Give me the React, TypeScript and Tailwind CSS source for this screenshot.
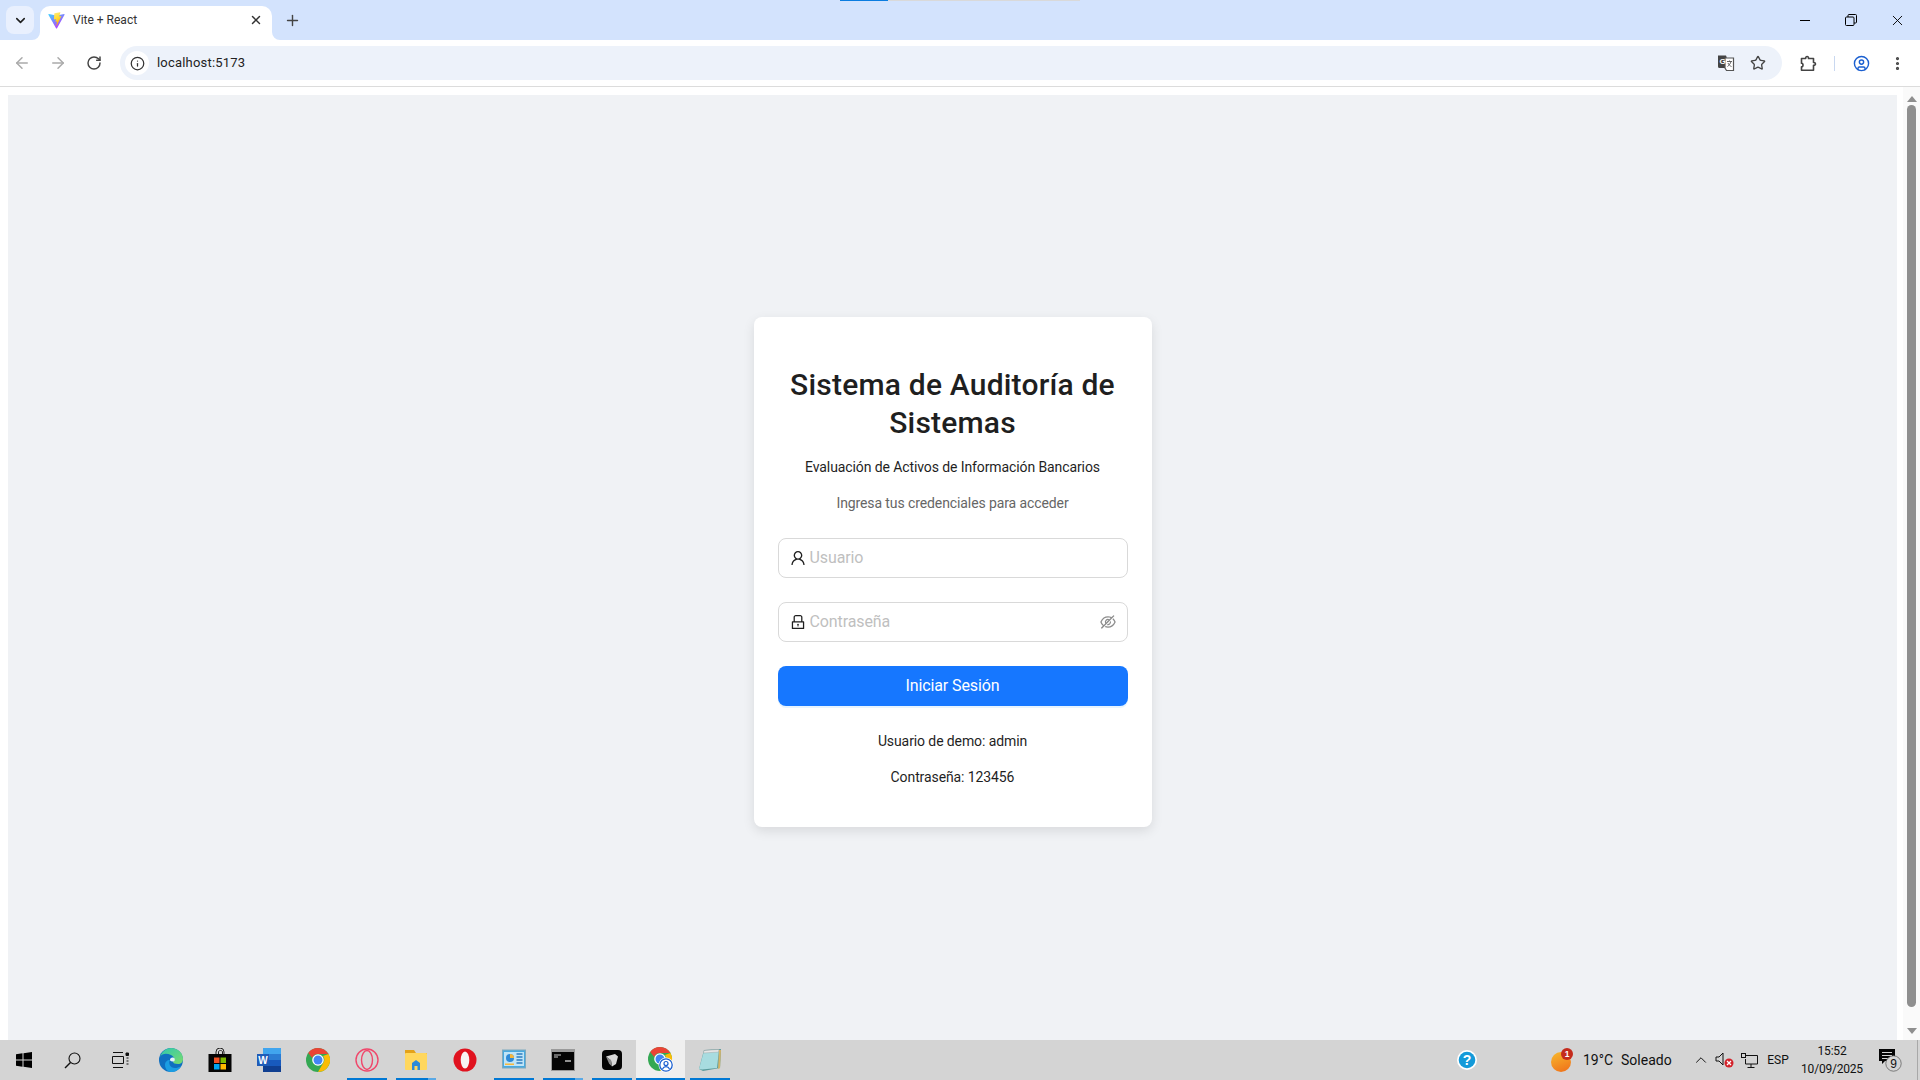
import React from 'react';
import { ArrowLeft, ArrowRight, ChevronDown, ChevronUp, CircleUser, EllipsisVertical, Info, Plus, RotateCw, Star, X } from 'lucide-react';
import { AiOutlineEyeInvisible, AiOutlineLock, AiOutlineUser } from 'react-icons/ai';

const ViteLogo = () => (
  <svg width="17" height="17" viewBox="0 0 410 404">
    <defs>
      <linearGradient id="viteA" x1="0" y1="0" x2="0.7" y2="1">
        <stop offset="0" stopColor="#41d1ff" />
        <stop offset="1" stopColor="#bd34fe" />
      </linearGradient>
      <linearGradient id="viteB" x1="0" y1="0" x2="0.3" y2="1">
        <stop offset="0" stopColor="#ffea83" />
        <stop offset="0.5" stopColor="#ffdd35" />
        <stop offset="1" stopColor="#ffa800" />
      </linearGradient>
    </defs>
    <path d="M399 63 215 392c-4 7-14 7-18 0L10 63c-4-7 2-16 10-15l184 33h4l181-33c8-1 14 8 10 15z" fill="url(#viteA)" />
    <path d="M292 1 156 28c-2 0-4 2-4 4l-8 141c0 3 3 6 6 5l38-9c4-1 7 2 6 6l-11 55c-1 4 3 7 6 6l24-7c4-1 7 2 6 6l-18 88c-1 5 6 8 9 3l2-3 111-221c2-4-1-8-5-7l-39 8c-4 1-7-3-6-6l25-88c1-4-3-8-6-7z" fill="url(#viteB)" />
  </svg>
);

const TranslateIcon = () => (
  <svg width="18" height="18" viewBox="0 0 18 18">
    <path d="M1 1.500h8l.6 1.500v11H2.500A1.500 1.500 0 0 1 1 12.500z" fill="#444" />
    <path d="M8 4h8.500v12.500H9.500L8 14z" fill="#fff" stroke="#555" strokeWidth="1.200" />
    <text x="2.600" y="10" fontSize="8" fontWeight="700" fill="#fff" fontFamily="Liberation Sans, sans-serif">G</text>
    <path d="M10 7.500h5M12.500 6.500v1M14 7.500c-.5 2-2 4-3.500 5M11 9c.6 1.500 2 3 3.500 3.500" fill="none" stroke="#555" strokeWidth="0.900" />
  </svg>
);

const PuzzleIcon = () => (
  <svg width="17" height="17" viewBox="0 0 17 17" fill="none" stroke="#444" strokeWidth="1.600" strokeLinejoin="round">
    <path d="M1.500 3.500h4.200c-.4-2.600 3.200-2.600 2.800 0h5v4c2.600-.4 2.600 3.200 0 2.800v5H1.500v-3.400c2 .4 2-4 0-3.600z" />
  </svg>
);

const RestoreIcon = () => (
  <svg width="12" height="12" viewBox="0 0 12 12" fill="none" stroke="#000" strokeWidth="1">
    <rect x="0.500" y="3" width="8.500" height="8.500" rx="1" />
    <path d="M3 3V1.500a1 1 0 0 1 1-1h6.500a1 1 0 0 1 1 1V8a1 1 0 0 1-1 1H9" />
  </svg>
);

const WindowsIcon = () => (
  <svg width="16" height="16" viewBox="0 0 16 16" fill="#000">
    <path d="M0 2.300 6.500 1.300v6.200H0zM7.500 1.200 16 0v7.500H7.500zM0 8.500h6.500v6.200L0 13.700zM7.500 8.500H16V16l-8.500-1.200z" />
  </svg>
);

const SearchIcon = () => (
  <svg width="17" height="17" viewBox="0 0 17 17" fill="none" stroke="#111" strokeWidth="1.100">
    <circle cx="10.500" cy="6.500" r="5.500" />
    <path d="M6.500 10.500 1 16" strokeWidth="1.500" />
  </svg>
);

const TaskViewIcon = () => (
  <svg width="17" height="16" viewBox="0 0 17 16" fill="none" stroke="#111" strokeWidth="1">
    <path d="M1 .5h10M1 15.500h10M.5 4.500h11v7H.5z" />
    <path d="M14 1h2.500v2.500H14z" fill="#111" />
    <path d="M14.500 6h2M14.500 9h2M14.500 12h2" />
  </svg>
);

const EdgeIcon = () => (
  <svg width="24" height="24" viewBox="0 0 24 24">
    <defs>
      <linearGradient id="edgeA" x1="0" y1="0" x2="1" y2="1">
        <stop offset="0" stopColor="#2fc7b0" />
        <stop offset="1" stopColor="#7bdc6c" />
      </linearGradient>
    </defs>
    <circle cx="12" cy="12" r="12" fill="#0f6fc0" />
    <path d="M1 9C3 3 8 0 12 0c7 0 12 5 12 11 0 3-2 5-5 5-3 0-5-1-5-2 2-1 2-5-2-7C8 5 3 5 1 9z" fill="url(#edgeA)" />
    <path d="M11 12c-2 3 0 8 5 8 2 0 4-.5 6-2-2 4-6 6-10 6-4 0-6-4-6-7 0-3 2-5 5-5z" fill="#1b9de2" />
    <path d="M11 12c0-2 2-3 4-2 1 .5 1 2.500 0 3.500-2 0-4-.5-4-1.500z" fill="#fff" opacity="0.9" />
  </svg>
);

const StoreIcon = () => (
  <svg width="24" height="24" viewBox="0 0 24 24">
    <path d="M8 7V4a4 4 0 0 1 8 0v3M10.500 7V3.500a2.500 2.500 0 0 1 4 0V7" fill="none" stroke="#222" strokeWidth="1" />
    <rect x="0.500" y="6" width="23" height="18" fill="#050505" />
    <rect x="6" y="9.500" width="5.500" height="5.500" fill="#f25022" />
    <rect x="12.500" y="9.500" width="5.500" height="5.500" fill="#7fba00" />
    <rect x="6" y="16" width="5.500" height="5.500" fill="#00a4ef" />
    <rect x="12.500" y="16" width="5.500" height="5.500" fill="#ffb900" />
  </svg>
);

const WordIcon = () => (
  <svg width="24" height="24" viewBox="0 0 24 24">
    <rect x="6" y="0" width="18" height="6" fill="#41a5ee" />
    <rect x="6" y="6" width="18" height="6" fill="#2b7cd3" />
    <rect x="6" y="12" width="18" height="6" fill="#185abd" />
    <rect x="6" y="18" width="18" height="6" fill="#103f91" />
    <rect x="0" y="6" width="12" height="12" fill="#1f5cb8" />
    <text x="6" y="16" textAnchor="middle" fontSize="10" fontWeight="700" fill="#fff" fontFamily="Liberation Sans, sans-serif">W</text>
  </svg>
);

const ChromeIcon = () => (
  <svg width="24" height="24" viewBox="0 0 24 24">
    <circle cx="12" cy="12" r="12" fill="#34a853" />
    <path d="M12 0a12 12 0 0 1 10.400 6H12a6 6 0 0 0-5.700 4L2.200 5A12 12 0 0 1 12 0z" fill="#ea4335" />
    <path d="M22.400 6A12 12 0 0 1 12 24l5.200-9A6 6 0 0 0 17 8z" fill="#fbbc04" />
    <circle cx="12" cy="12" r="5.800" fill="#fff" />
    <circle cx="12" cy="12" r="4.500" fill="#4285f4" />
  </svg>
);

const OperaGxIcon = () => (
  <svg width="24" height="24" viewBox="0 0 24 24" fill="none" stroke="#f0476b" strokeWidth="1.400">
    <circle cx="12" cy="12" r="11" />
    <ellipse cx="12" cy="12" rx="5.500" ry="9.500" />
  </svg>
);

const FolderIcon = () => (
  <svg width="24" height="24" viewBox="0 0 24 24">
    <path d="M1 2h9l2 3h11v3H1z" fill="#e3a21a" />
    <rect x="1" y="5" width="22" height="17" rx="1" fill="#ffd75e" />
    <path d="M8 22v-7l4-3 4 3v7z" fill="#2b8ad8" />
    <rect x="10.500" y="18" width="3" height="4" fill="#ffd75e" />
  </svg>
);

const OperaIcon = () => (
  <svg width="24" height="24" viewBox="0 0 24 24">
    <circle cx="12" cy="12" r="11.500" fill="#e0121f" />
    <ellipse cx="12" cy="12" rx="4.300" ry="8.600" fill="#f7f3f3" />
  </svg>
);

const ControlIcon = () => (
  <svg width="24" height="22" viewBox="0 0 24 22">
    <rect x="0.500" y="1" width="23" height="18" fill="#48a9df" stroke="#7fa9bd" />
    <rect x="2" y="3" width="20" height="14" fill="#bfe4f7" />
    <circle cx="8" cy="9" r="4" fill="#2e8ad8" />
    <path d="M8 9V5a4 4 0 0 1 4 4z" fill="#f6b73c" />
    <path d="M14.500 5h6M14.500 8h6M14.500 11h6M14.500 14h6" stroke="#2e7cc0" strokeWidth="1.500" />
    <rect x="3" y="14.500" width="9" height="1.500" fill="#f6b73c" />
  </svg>
);

const TerminalIcon = () => (
  <svg width="24" height="22" viewBox="0 0 24 22">
    <rect x="0" y="0" width="24" height="22" fill="#9a9a9a" />
    <rect x="1" y="3" width="22" height="18" fill="#050505" />
    <path d="M3 6h7M3 8h4" stroke="#ccc" strokeWidth="1" />
    <path d="M14 12h6" stroke="#eee" strokeWidth="1.200" />
  </svg>
);

const BlackAppIcon = () => (
  <svg width="20" height="20" viewBox="0 0 20 20">
    <rect width="20" height="20" rx="4" fill="#050505" />
    <path d="M4 6.500 13 4l3 2.500-2 7.500-4 2.500-1-6z" fill="#d9d9d9" />
    <path d="M4 6.500 9 10l1 6.500-3-3z" fill="#8c8c8c" />
  </svg>
);

const ProfileChromeIcon = () => (
  <svg width="26" height="26" viewBox="0 0 26 26">
    <g>
      <circle cx="12" cy="12" r="12" fill="#34a853" />
      <path d="M12 0a12 12 0 0 1 10.400 6H12a6 6 0 0 0-5.700 4L2.200 5A12 12 0 0 1 12 0z" fill="#ea4335" />
      <path d="M22.400 6A12 12 0 0 1 12 24l5.200-9A6 6 0 0 0 17 8z" fill="#fbbc04" />
      <circle cx="12" cy="12" r="5.800" fill="#fff" />
      <circle cx="12" cy="12" r="4.500" fill="#4285f4" />
    </g>
    <circle cx="18" cy="18" r="7.500" fill="#fff" />
    <circle cx="18" cy="18" r="6.200" fill="none" stroke="#1a5fd0" strokeWidth="1.300" />
    <circle cx="18" cy="16.500" r="2" fill="none" stroke="#1a5fd0" strokeWidth="1.200" />
    <path d="M14.500 22c.8-1.800 2-2.300 3.500-2.300s2.700.5 3.500 2.300" fill="none" stroke="#1a5fd0" strokeWidth="1.200" />
  </svg>
);

const NotepadIcon = () => (
  <svg width="24" height="24" viewBox="0 0 24 24">
    <path d="M6 2 23 1l-1 19-17 3L1 21z" fill="#5a9a9c" />
    <path d="M6 3 21 2l-2 18-15 1.500L1 21z" fill="#a8dce0" />
    <path d="M6 2.500 21 1.500 20.500 4 5.500 5z" fill="#e7e7e7" stroke="#999" strokeWidth="0.400" />
    <path d="M21 2l2 0-1 18-2 1z" fill="#d3b46a" />
  </svg>
);

const HelpIcon = () => (
  <svg width="20" height="20" viewBox="0 0 20 20">
    <circle cx="10" cy="10" r="10" fill="#fff" />
    <circle cx="10" cy="10" r="8.300" fill="#149ad9" />
    <text x="10" y="15" textAnchor="middle" fontSize="14" fontWeight="700" fill="#fff" fontFamily="Liberation Sans, sans-serif">?</text>
  </svg>
);

const WeatherIcon = () => (
  <svg width="24" height="24" viewBox="0 0 24 24">
    <defs>
      <linearGradient id="sun" x1="0.200" y1="0" x2="0.600" y2="1">
        <stop offset="0" stopColor="#f7b52c" />
        <stop offset="1" stopColor="#f0761b" />
      </linearGradient>
    </defs>
    <circle cx="10" cy="14" r="10" fill="url(#sun)" />
    <circle cx="16" cy="6" r="6" fill="#c42b1c" />
    <text x="16" y="9" textAnchor="middle" fontSize="8.500" fontWeight="700" fill="#fff" fontFamily="Liberation Sans, sans-serif">1</text>
  </svg>
);

const MutedSpeakerIcon = () => (
  <svg width="20" height="18" viewBox="0 0 20 18">
    <path d="M1 6h3l4-4v12l-4-4H1z" fill="none" stroke="#111" strokeWidth="1" />
    <circle cx="14" cy="12" r="4.500" fill="#d3222a" />
    <path d="M12 10l4 4M16 10l-4 4" stroke="#fff" strokeWidth="1.300" />
  </svg>
);

const NetworkIcon = () => (
  <svg width="17" height="15" viewBox="0 0 17 15" fill="none" stroke="#111" strokeWidth="1">
    <path d="M5 2.500h11.500v8.500H4.500V6M10 11v3M6.500 14.500h7" />
    <rect x="0.500" y="0.500" width="4" height="4" />
  </svg>
);

const NotifyIcon = () => (
  <svg width="24" height="24" viewBox="0 0 24 24">
    <path d="M1 1h16v12H7l-3 3v-3H1z" fill="#050505" />
    <path d="M4 4.500h10M4 7.500h10M4 10.500h7" stroke="#d4d4d4" strokeWidth="1" />
    <circle cx="15.500" cy="15.500" r="7.700" fill="#d4d4d4" stroke="#555" strokeWidth="0.700" />
    <text x="15.500" y="20" textAnchor="middle" fontSize="12" fill="#111" fontFamily="Liberation Sans, sans-serif">9</text>
  </svg>
);

const TaskSlot = ({ children, mark, active }: { children: React.ReactNode; mark?: 'full' | 'split'; active?: boolean }) => (
  <div className={`flex h-full w-[49px] shrink-0 flex-col items-center ${active ? 'bg-[#efefef]' : ''}`}>
    <div className="flex flex-1 items-center justify-center pt-px">{children}</div>
    {mark === 'full' && <div className={`h-[2px] ${active ? 'w-full' : 'w-10'} bg-[#0078d4]`} />}
    {mark === 'split' && (
      <div className="flex h-[2px] w-10">
        <div className="w-8 bg-[#0078d4]" />
        <div className="w-2 bg-[#5aa9e6]" />
      </div>
    )}
    {!mark && <div className="h-[2px]" />}
  </div>
);

export default function App() {
  return (
    <div className="flex h-screen w-full flex-col overflow-hidden bg-white font-['Roboto',sans-serif]">
      {/* barra de pestañas */}
      <div className="relative flex h-10 shrink-0 items-end bg-[#d3e3fd] pl-[6px]">
        <div className="absolute left-[840px] top-0 flex h-px">
          <div className="w-12 bg-[#0a7ce0]" />
          <div className="w-48 bg-[#d9d9d9]" />
        </div>
        <div className="mb-[6px] flex h-7 w-7 items-center justify-center rounded-lg bg-[#e9f0fe] text-[#1f1f1f]">
          <ChevronDown size={15} strokeWidth={2.500} />
        </div>
        <div className="relative ml-[6px] flex h-[34px] w-[232px] items-center rounded-t-[10px] bg-white pb-[6px] pl-2 pr-[9px]">
          <svg width="8" height="8" viewBox="0 0 8 8" className="absolute -left-2 bottom-0"><path d="M8 0v8H0a8 8 0 0 0 8-8z" fill="#fff" /></svg>
          <ViteLogo />
          <span className="ml-[8px] flex-1 text-xs text-[#333]">Vite + React</span>
          <X size={14} strokeWidth={2.500} className="text-[#333]" />
          <svg width="8" height="8" viewBox="0 0 8 8" className="absolute -right-2 bottom-0"><path d="M0 0v8h8a8 8 0 0 1-8-8z" fill="#fff" /></svg>
        </div>
        <div className="ml-2 flex h-[34px] w-6 items-center justify-center pb-[6px] text-[#444]">
          <Plus size={17} strokeWidth={2} />
        </div>
        <div className="ml-auto flex h-10 items-center text-black">
          <div className="flex w-[46px] justify-center"><div className="h-px w-[10px] bg-black" /></div>
          <div className="flex w-[46px] justify-center"><RestoreIcon /></div>
          <div className="flex w-[46px] justify-center"><X size={17} strokeWidth={1.300} /></div>
        </div>
      </div>

      {/* barra de direcciones */}
      <div className="flex h-[47px] shrink-0 items-center rounded-t-[10px] border-b border-[#dcdcdc] bg-white pl-[13px]">
        <ArrowLeft size={18} className="text-[#aaa]" />
        <ArrowRight size={18} className="ml-[18px] text-[#aaa]" />
        <RotateCw size={16} strokeWidth={2.200} className="ml-[19px] text-[#444]" />
        <div className="ml-[18px] flex h-[34px] w-[1662px] items-center rounded-full bg-[#edf2fa] pl-[5px] pr-4">
          <div className="flex h-6 w-6 items-center justify-center rounded-full bg-white">
            <Info size={15} strokeWidth={2} className="text-[#333]" />
          </div>
          <span className="ml-2 flex-1 text-[13px] tracking-[0.2px] text-[#222]">localhost:5173</span>
          <TranslateIcon />
          <Star size={16} strokeWidth={2} className="ml-[15px] text-[#444]" />
        </div>
        <div className="ml-[18px]"><PuzzleIcon /></div>
        <div className="ml-[17px] h-[15px] w-px bg-[#c9d8f0]" />
        <CircleUser size={17} strokeWidth={2} className="ml-[18px] text-[#1a5fd0]" />
        <EllipsisVertical size={17} strokeWidth={2.500} className="ml-[19px] text-[#444]" />
      </div>

      {/* contenido de la pagina */}
      <div className="flex min-h-0 flex-1">
        <div className="flex min-w-0 flex-1 pl-2 pr-[6px] pt-2">
          <div className="flex flex-1 items-center justify-center bg-[#f0f2f5] pt-2">
            <div className="w-[398px] rounded-lg bg-white px-6 pb-[25px] pt-[49px] text-center text-sm leading-[22px] tracking-[-0.1px] text-[#1f1f1f] shadow-[0_4px_12px_rgba(0,0,0,0.1)]">
              <h2 className="mb-[14px] text-[30px] font-medium leading-[38px] tracking-[0.2px]">Sistema de Auditoría de Sistemas</h2>
              <p className="mb-[14px]">Evaluación de Activos de Información Bancarios</p>
              <p className="mb-6 text-[#666]">Ingresa tus credenciales para acceder</p>
              <div className="mb-6 flex h-10 items-center rounded-lg border border-[#d9d9d9] px-[11px] text-base">
                <AiOutlineUser size={18} className="-ml-px mr-[3px] text-[#1f1f1f]" />
                <input placeholder="Usuario" className="min-w-0 flex-1 bg-transparent outline-none placeholder:text-[#bfbfbf]" />
              </div>
              <div className="mb-6 flex h-10 items-center rounded-lg border border-[#d9d9d9] px-[11px] text-base">
                <AiOutlineLock size={18} className="-ml-px mr-[3px] text-[#1f1f1f]" />
                <input placeholder="Contraseña" className="min-w-0 flex-1 bg-transparent outline-none placeholder:text-[#bfbfbf]" />
                <AiOutlineEyeInvisible size={18} className="-mr-px text-[#8c8c8c]" />
              </div>
              <button className="mb-6 h-10 w-full rounded-lg bg-[#1677ff] text-base text-white shadow-[0_2px_0_rgba(5,145,255,0.1)]">Iniciar Sesión</button>
              <p className="mb-[14px]">Usuario de demo: admin</p>
              <p className="mb-[14px]">Contraseña: 123456</p>
            </div>
          </div>
        </div>
        <div className="flex w-[17px] flex-col items-center bg-[#fafafa] pt-[9px]">
          <div className="h-0 w-0 border-x-[5px] border-b-[6px] border-x-transparent border-b-[#8f8f8f]" />
          <div className="mt-[3px] h-[902px] w-[9px] rounded-full bg-[#8f8f8f]" />
          <div className="mb-[6px] mt-auto h-0 w-0 border-x-[5px] border-t-[6px] border-x-transparent border-t-[#8f8f8f]" />
        </div>
      </div>

      {/* barra de tareas */}
      <div className="flex h-10 shrink-0 items-stretch bg-[#d4d4d4] text-[#111]">
        <div className="flex w-12 items-center justify-center"><WindowsIcon /></div>
        <div className="flex w-12 items-center justify-center"><SearchIcon /></div>
        <div className="flex w-12 items-center justify-center"><TaskViewIcon /></div>
        <div className="ml-[2px] flex">
          <TaskSlot><EdgeIcon /></TaskSlot>
          <TaskSlot><StoreIcon /></TaskSlot>
          <TaskSlot><WordIcon /></TaskSlot>
          <TaskSlot><ChromeIcon /></TaskSlot>
          <TaskSlot mark="full"><OperaGxIcon /></TaskSlot>
          <TaskSlot mark="split"><FolderIcon /></TaskSlot>
          <TaskSlot><OperaIcon /></TaskSlot>
          <TaskSlot mark="full"><ControlIcon /></TaskSlot>
          <TaskSlot mark="split"><TerminalIcon /></TaskSlot>
          <TaskSlot mark="full"><BlackAppIcon /></TaskSlot>
          <TaskSlot mark="full" active><ProfileChromeIcon /></TaskSlot>
          <TaskSlot mark="full"><NotepadIcon /></TaskSlot>
        </div>
        <div className="ml-auto flex w-[470px] items-center text-sm">
          <div className="flex w-[34px] justify-center"><HelpIcon /></div>
          <div className="ml-[67px] w-6"><WeatherIcon /></div>
          <span className="ml-2 w-[38px]">19°C</span>
          <span className="w-[50px]">Soleado</span>
          <ChevronUp size={18} strokeWidth={1.300} className="ml-[21px]" />
          <div className="ml-[3px] flex w-6 justify-center"><MutedSpeakerIcon /></div>
          <div className="ml-1 w-[17px]"><NetworkIcon /></div>
          <span className="ml-[5px] w-[30px] text-center text-xs">ESP</span>
          <div className="ml-px w-[76px] text-center text-xs leading-[18px] tracking-[-0.2px]">
            <div>15:52</div>
            <div>10/09/2025</div>
          </div>
          <div className="ml-2 w-6"><NotifyIcon /></div>
          <div className="ml-[15px] h-full w-px bg-[#a8a8a8]" />
        </div>
      </div>
    </div>
  );
}
